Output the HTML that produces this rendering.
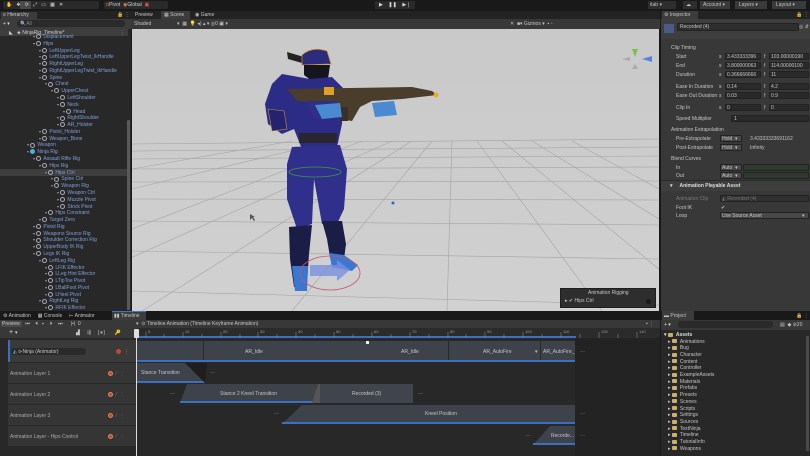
<!DOCTYPE html>
<html><head><meta charset="utf-8">
<style>
*{margin:0;padding:0;box-sizing:border-box}
body{width:810px;height:456px;background:#191919;font-family:"Liberation Sans",sans-serif;font-size:5px;color:#c4c4c4;position:relative;overflow:hidden}
.a{position:absolute}
.t{position:absolute;white-space:nowrap;line-height:6px}
.hr{position:absolute;left:0;width:128px;height:7px}
.ic{display:inline-block;width:5px;height:5px;border:1px solid #aab;border-radius:50%;vertical-align:middle;margin-right:2px}
.lb{color:#7d9fdc}
.fld{position:absolute;background:#2a2a2a;border:1px solid #222;height:7px;border-radius:1px}
.clip{position:absolute;background:#3c4048;border-bottom:2px solid #3b6fc0}
.fold{display:inline-block;width:5px;height:4px;background:#c8b070;margin-right:3px;vertical-align:middle;border-radius:1px}
</style></head><body>

<div class="a" style="left:0;top:0;width:810px;height:11px;background:#191919"></div>
<div class="a" style="left:3px;top:1px;width:96px;height:8px;background:#2a2a2a;border-radius:2px"></div>
<div class="a" style="left:20px;top:1px;width:11px;height:8px;background:#4a4a4a"></div>
<div class="t" style="left:6px;top:2px;color:#ddd">✋&nbsp;&nbsp;&nbsp;✥&nbsp;&nbsp;&nbsp;⟳&nbsp;&nbsp;&nbsp;⤢&nbsp;&nbsp;&nbsp;▭&nbsp;&nbsp;&nbsp;▦&nbsp;&nbsp;&nbsp;✕</div>
<div class="a" style="left:104px;top:1px;width:64px;height:8px;background:#2a2a2a;border-radius:2px"></div>
<div class="t" style="left:106px;top:2px;color:#ccc"><span style="color:#d55">◘</span>Pivot &nbsp;<span style="color:#d85">◉</span>Global &nbsp;<span style="color:#d55">▣</span></div>
<div class="a" style="left:375px;top:1px;width:40px;height:8px;background:#2a2a2a"></div>
<div class="t" style="left:379px;top:2px;color:#ddd">▶&nbsp;&nbsp;&nbsp;&nbsp;❚❚&nbsp;&nbsp;&nbsp;&nbsp;▶❘</div>
<div class="a" style="left:648px;top:1px;width:28px;height:8px;background:#2e2e2e"></div>
<div class="t" style="left:650px;top:2px">itab ▾</div>
<div class="a" style="left:683px;top:1px;width:14px;height:8px;background:#2e2e2e"></div>
<div class="t" style="left:686px;top:2px">☁</div>
<div class="a" style="left:700px;top:1px;width:30px;height:8px;background:#3a3a3a"></div>
<div class="t" style="left:703px;top:2px">Account ▾</div>
<div class="a" style="left:735px;top:1px;width:32px;height:8px;background:#3a3a3a"></div>
<div class="t" style="left:739px;top:2px">Layers ▾</div>
<div class="a" style="left:772px;top:1px;width:34px;height:8px;background:#3a3a3a"></div>
<div class="t" style="left:776px;top:2px">Layout ▾</div>

<div class="a" style="left:0;top:11px;width:131px;height:300px;background:#282828"></div>
<div class="a" style="left:0;top:11px;width:131px;height:8px;background:#232323"></div>
<div class="a" style="left:1px;top:12px;width:36px;height:7px;background:#3c3c3c"></div>
<div class="t" style="left:3px;top:12px">≡ Hierarchy</div>
<div class="t" style="left:117px;top:12px">🔒 ⋮</div>
<div class="a" style="left:0;top:19px;width:131px;height:10px;background:#3c3c3c"></div>
<div class="t" style="left:3px;top:21px;color:#ddd">+ ▾</div>
<div class="a" style="left:17px;top:20px;width:108px;height:7px;background:#2a2a2a;border-radius:3px"></div>
<div class="t" style="left:20px;top:21px;color:#888">🔍All</div>
<div class="a" style="left:0;top:29px;width:128px;height:7px;background:#3e3e3e"></div>
<div class="t" style="left:9px;top:30px;color:#ccc">◣&nbsp;&nbsp; ◈ NinjaRig_Timeline*</div>
<div class="t" style="left:120px;top:30px">⋮</div>
<div id="hier"></div>
<div class="a" style="left:127px;top:120px;width:3px;height:190px;background:#5a5a5a;border-radius:1px"></div>

<div class="a" style="left:131px;top:11px;width:529px;height:8px;background:#232323"></div>
<div class="t" style="left:135px;top:12px">Preview</div>
<div class="a" style="left:161px;top:11px;width:29px;height:8px;background:#3c3c3c"></div>
<div class="t" style="left:164px;top:12px">▦ Scene</div>
<div class="t" style="left:195px;top:12px">◉ Game</div>
<div class="a" style="left:131px;top:19px;width:529px;height:10px;background:#383838"></div>
<div class="t" style="left:134px;top:21px">Shaded</div>
<div class="t" style="left:177px;top:21px">▾ &nbsp;▦ &nbsp;💡 ◂) ▴ ▾ ◎0 ▣ ▾</div>
<div class="t" style="left:510px;top:21px">✕ &nbsp;■▾ Gizmos ▾ &nbsp;▪ ▫</div>
<svg class="a" style="left:132px;top:29px" width="527" height="282" viewBox="0 0 527 282">
<defs><linearGradient id="sk" x1="0" y1="0" x2="0" y2="1"><stop offset="0" stop-color="#c9c9c9"/><stop offset="1" stop-color="#d1d1d1"/></linearGradient></defs>
<rect width="527" height="282" fill="url(#sk)"/>
<g stroke="#9a9a9a" stroke-width="0.6" fill="none" opacity="0.8">
<path d="M0 115 L527 110"/><path d="M0 122 L527 118"/><path d="M0 130 L527 127"/><path d="M0 140 L527 138"/><path d="M0 153 L527 152"/><path d="M0 170 L527 171"/><path d="M0 192 L527 196"/><path d="M0 222 L527 230"/><path d="M0 262 L527 276"/>
<path d="M280 112 L10 282"/><path d="M300 112 L160 282"/><path d="M320 112 L315 282"/><path d="M345 112 L470 282"/><path d="M370 112 L527 240"/><path d="M260 112 L-120 282"/><path d="M400 112 L527 190"/><path d="M440 112 L527 160"/><path d="M230 112 L0 200"/><path d="M200 112 L0 160"/><path d="M160 112 L0 140"/>
</g>
<g>
<!-- head -->
<path d="M155 23 L172 28 L170 34 L156 30Z" fill="#222"/>
<path d="M170 26 Q180 17 195 22 L199 35 L170 36Z" fill="#2c2c7a" stroke="#c89030" stroke-width="0.7"/>
<path d="M172 36 L198 36 L196 50 L180 52 L172 46Z" fill="#151520"/>
<!-- torso -->
<path d="M150 45 L178 50 L200 48 L212 60 L210 95 L205 118 L170 120 L162 100 L150 105 L136 95 L133 75 L140 55Z" fill="#2c2c86"/>
<path d="M136 80 L152 82 L155 100 L140 102Z" fill="#232370" stroke="#c89030" stroke-width="0.6"/>
<rect x="167" y="104" width="38" height="10" fill="#2a2530"/>
<!-- legs -->
<path d="M160 118 L208 116 L215 140 L212 180 L205 195 L190 195 L182 150 L180 195 L165 200 L155 170 L155 135Z" fill="#30308c"/>
<path d="M157 198 L180 196 L177 225 L175 255 L162 258 L158 230Z" fill="#1a1d45"/>
<path d="M190 192 L210 192 L214 215 L212 230 L198 228 L195 210Z" fill="#1a1d45"/>
<path d="M160 237 L176 237 L175 262 L163 262Z" fill="#3a78d0"/>
<path d="M197 224 L212 226 L226 236 L220 242 L200 238Z" fill="#3a78d0"/>
<!-- gun & arms -->
<path d="M155 60 L280 58 L300 62 L305 66 L270 70 L240 72 L228 78 L220 92 L208 90 L205 75 L165 72Z" fill="#4a3d2c"/>
<rect x="192" y="58" width="10" height="8" fill="#e0a020"/>
<circle cx="304" cy="66" r="2.5" fill="#e8b020"/>
<rect x="208" y="78" width="8" height="14" fill="#3a3028"/>
<path d="M175 72 L205 72 L208 88 L182 92Z" fill="#2f2f8a"/>
<path d="M183 76 L208 74 L210 88 L190 90Z" fill="#4a8ad0"/>
<path d="M240 74 L262 72 L265 86 L243 88Z" fill="#4a8ad0"/>
<ellipse cx="183" cy="143" rx="26" ry="5" fill="none" stroke="#3a9a3a" stroke-width="0.8"/>
<ellipse cx="198" cy="244" rx="30" ry="17" fill="none" stroke="#c85070" stroke-width="0.8"/>
<path d="M178 236 L205 236 L205 231 L218 241 L205 252 L205 247 L178 247Z" fill="#7a90e0" opacity="0.8"/>
<circle cx="261" cy="174" r="1.5" fill="#2a6ad0"/>
<path d="M118 185 L118 191 L120 189 L122 192 L123 191 L121 188 L123 188Z" fill="#555"/>
</g>
<path d="M500 20 L503 28 L506 20Z" fill="#7ac050"/><path d="M510 30 L520 27 L520 33Z" fill="#5a80e0"/><path d="M490 30 L498 28 L498 32Z" fill="#aaa"/><path d="M500 40 L503 35 L506 40Z" fill="#aaa"/>
</svg>
<div class="a" style="left:560px;top:288px;width:96px;height:20px;background:#2e2e2e;border:1px solid #1e1e1e"></div>
<div class="t" style="left:588px;top:290px">Animation Rigging</div>
<div class="t" style="left:565px;top:298px">▸ ✔ Hips Ctrl</div>
<div class="a" style="left:646px;top:299px;width:5px;height:5px;border-radius:50%;background:#1a1a1a"></div>

<div class="a" style="left:661px;top:11px;width:149px;height:300px;background:#383838"></div>
<div class="a" style="left:661px;top:11px;width:149px;height:8px;background:#232323"></div>
<div class="a" style="left:662px;top:11px;width:36px;height:8px;background:#3c3c3c"></div>
<div class="t" style="left:664px;top:12px">⚙ Inspector</div>
<div class="t" style="left:796px;top:12px">🔒 ⋮</div>
<div class="a" style="left:661px;top:19px;width:149px;height:20px;background:#3e3e3e"></div>
<div class="a" style="left:664px;top:24px;width:10px;height:9px;background:#4a5a8a"></div>
<div class="fld" style="left:677px;top:23px;width:122px;height:8px;background:#2e2e2e"></div>
<div class="t" style="left:680px;top:24px">Recorded (4)</div>
<div class="t" style="left:799px;top:24px">◎ ⇵</div>
<div id="insp"></div>
<div class="a" style="left:661px;top:180px;width:149px;height:11px;background:#3e3e3e;border-top:1px solid #2a2a2a"></div>
<div class="t" style="left:670px;top:183px;color:#ddd;font-weight:bold">▾ &nbsp;&nbsp;&nbsp;&nbsp;Animation Playable Asset</div>

<div class="a" style="left:0;top:311px;width:660px;height:145px;background:#282828"></div>
<div class="a" style="left:0;top:311px;width:660px;height:9px;background:#191919"></div>
<div class="t" style="left:3px;top:313px">⚙ Animation &nbsp;&nbsp;&nbsp;&nbsp;▦ Console &nbsp;&nbsp;&nbsp;&nbsp;⊢ Animator</div>
<div class="a" style="left:112px;top:311px;width:34px;height:9px;background:#3c3c3c;border-top:1px solid #3a79c0"></div>
<div class="t" style="left:114px;top:313px">▮▮ Timeline</div>
<div class="a" style="left:0;top:320px;width:660px;height:8px;background:#383838"></div>
<div class="a" style="left:1px;top:321px;width:21px;height:6px;background:#4a4a4a"></div>
<div class="t" style="left:2px;top:321px">Preview &nbsp;&nbsp;&nbsp;⏮ &nbsp;&nbsp;&nbsp;⏴ &nbsp;&nbsp;▸ &nbsp;&nbsp;&nbsp;⏵ &nbsp;&nbsp;&nbsp;⏭ &nbsp;&nbsp;&nbsp;&nbsp;&nbsp;|•| &nbsp;0</div>
<div class="t" style="left:136px;top:321px">▾ &nbsp;⊙ Timeline Animation (Timeline Keyframe Animation)</div>
<div class="t" style="left:646px;top:321px">▪ ⋮</div>
<div class="a" style="left:0;top:328px;width:136px;height:10px;background:#383838"></div>
<div class="t" style="left:9px;top:330px;font-size:7px;color:#ddd">+ <span style="font-size:5px">▾</span></div>
<div class="t" style="left:76px;top:330px">▟ &nbsp;&nbsp;&nbsp;&nbsp;⇶ &nbsp;&nbsp;&nbsp;&nbsp;[∗] &nbsp;&nbsp;&nbsp;&nbsp;&nbsp;&nbsp;🔑</div>
<div class="a" style="left:136px;top:328px;width:524px;height:10px;background:#2b2b2b"></div>
<div class="a" style="left:136px;top:336px;width:440px;height:2px;background:#3b6fc0"></div>
<svg class="a" style="left:136px;top:328px" width="524" height="10">
<g stroke="#888" stroke-width="0.6">
<path d="M10 4 V10 M28 6 V10 M47 4 V10 M66 6 V10 M85 4 V10 M104 6 V10 M122 4 V10 M141 6 V10 M160 4 V10 M179 6 V10 M198 4 V10 M217 6 V10 M236 4 V10 M255 6 V10 M274 4 V10 M293 6 V10 M312 4 V10 M330 6 V10 M349 4 V10 M368 6 V10 M387 4 V10 M406 6 V10 M425 4 V10 M444 6 V10 M463 4 V10 M482 6 V10 M501 4 V10"/>
</g>
<g fill="#999" font-size="4" font-family="Liberation Sans"><text x="12" y="5">5</text><text x="49" y="5">10</text><text x="87" y="5">20</text><text x="124" y="5">30</text><text x="162" y="5">40</text><text x="200" y="5">50</text><text x="238" y="5">60</text><text x="276" y="5">70</text><text x="314" y="5">80</text><text x="351" y="5">90</text><text x="389" y="5">100</text><text x="427" y="5">110</text><text x="465" y="5">130</text><text x="503" y="5">140</text></g>
</svg>
<div class="a" style="left:134px;top:329px;width:5px;height:9px;background:#ddd;border-radius:1px"></div>
<div class="a" style="left:136px;top:338px;width:1px;height:118px;background:#ddd"></div>
<div class="a" style="left:575px;top:338px;width:85px;height:118px;background:#232323"></div>
<div class="a" style="left:8px;top:340px;width:128px;height:22px;background:#3a3a3a;border-left:2px solid #3b6fc0"></div>
<div class="a" style="left:11px;top:348px;width:75px;height:7px;background:#2a2a2a;border-radius:3px"></div>
<div class="t" style="left:13px;top:349px"><span style="color:#5ac">◭</span> ⊳Ninja (Animator)</div>
<div class="a" style="left:116px;top:349px;width:5px;height:5px;border-radius:50%;background:#c04a30"></div>
<div class="t" style="left:124px;top:349px">⋮</div>
<div id="tracks"></div>
<div class="clip" style="left:137px;top:341px;width:438px;height:21px;background:#3e424b"></div>
<div class="a" style="left:203px;top:341px;width:1px;height:19px;background:#2a2a2a"></div>
<div class="a" style="left:448px;top:341px;width:1px;height:19px;background:#2a2a2a"></div>
<div class="a" style="left:540px;top:341px;width:1px;height:19px;background:#2a2a2a"></div>
<div class="t" style="left:245px;top:349px">AR_Idle</div>
<div class="t" style="left:401px;top:349px">AR_Idle</div>
<div class="t" style="left:483px;top:349px">AR_AutoFire</div>
<div class="t" style="left:543px;top:349px">AR_AutoFire_</div>
<div class="t" style="left:535px;top:349px">▾</div>
<svg class="a" style="left:137px;top:362px" width="440" height="84">
<path d="M0 1 H50 L68 21 H0Z" fill="#3e424b"/><path d="M0 19 H68 V21 H0Z" fill="#3b6fc0"/>
<path d="M48 1 H70 L68 21Z" fill="#1e1e1e"/>
<path d="M43 41 L50 22 H276 V41Z" fill="#3e424b"/><path d="M43 39 H276 V41 H43Z" fill="#3b6fc0"/>
<path d="M183 22 H276 V41 H183Z" fill="#40444c"/><path d="M181 22 L183 22 L183 41 L175 41Z" fill="#555"/>
<path d="M145 62 L165 43 H438 V62Z" fill="#3e424b"/><path d="M145 60 H438 V62 H145Z" fill="#3b6fc0"/>
<path d="M396 83 L413 64 H438 V83Z" fill="#3e424b"/><path d="M396 81 H438 V83 H396Z" fill="#3b6fc0"/>
</svg>
<div class="t" style="left:141px;top:370px">Stance Transition</div>
<div class="t" style="left:220px;top:391px">Stance 2 Kneel Transition</div>
<div class="t" style="left:352px;top:391px">Recorded (3)</div>
<div class="t" style="left:425px;top:411px">Kneel Position</div>
<div class="t" style="left:551px;top:433px">Recorde...</div>
<div class="t" style="left:210px;top:370px;color:#666">—</div>
<div class="t" style="left:170px;top:391px;color:#666">—</div>
<div class="t" style="left:418px;top:391px;color:#666">—</div>
<div class="t" style="left:274px;top:411px;color:#666">—</div>
<div class="t" style="left:525px;top:433px;color:#666">—</div>
<div class="t" style="left:580px;top:349px;color:#666">—</div>
<div class="t" style="left:580px;top:411px;color:#666">—</div>
<div class="t" style="left:580px;top:433px;color:#666">—</div>
<div class="a" style="left:366px;top:341px;width:3px;height:3px;background:#eee"></div>

<div class="a" style="left:661px;top:311px;width:149px;height:145px;background:#282828"></div>
<div class="a" style="left:661px;top:311px;width:149px;height:9px;background:#191919"></div>
<div class="a" style="left:662px;top:311px;width:32px;height:9px;background:#3c3c3c"></div>
<div class="t" style="left:664px;top:313px">▬ Project</div>
<div class="t" style="left:796px;top:313px">🔒 ⋮</div>
<div class="a" style="left:661px;top:320px;width:149px;height:10px;background:#383838"></div>
<div class="t" style="left:664px;top:322px;color:#ddd">+ ▾</div>
<div class="a" style="left:678px;top:321px;width:95px;height:7px;background:#2a2a2a;border-radius:3px"></div>
<div class="t" style="left:780px;top:322px">▤ &nbsp;◆ ⊘20</div>
<div class="a" style="left:806px;top:336px;width:3px;height:115px;background:#4a4a4a"></div>
<div id="proj"></div>

<script>
var H=[["Displacement",2],["Hips",2],["LeftUpperLeg",3],["LeftUpperLegTwist_IkHandle",3],["RightUpperLeg",3],["RightUpperLegTwist_IkHandle",3],["Spine",3],["Chest",4],["UpperChest",5],["LeftShoulder",6],["Neck",6],["Head",7],["RightShoulder",6],["AR_Holster",6],["Pistol_Holster",3],["Weapon_Bone",3],["Weapon",1],["Ninja Rig",1],["Assault Rifle Rig",2],["Hips Rig",3],["Hips Ctrl",4],["Spine Ctrl",5],["Weapon Rig",5],["Weapon Ctrl",6],["Muzzle Pivot",6],["Stock Pivot",6],["Hips Constraint",4],["Target Zero",3],["Pistol Rig",2],["Weapons Source Rig",2],["Shoulder Correction Rig",2],["UpperBody IK Rig",2],["Legs IK Rig",2],["LeftLeg Rig",3],["LFIK Effector",4],["LLeg Hint Effector",4],["LTipToe Pivot",4],["LBallFoot Pivot",4],["LHeel Pivot",4],["RightLeg Rig",3],["RFIK Effector",4]];
var s="";H.forEach(function(h,i){var y=34+i*6.78;var x=27+6*h[1];
if(h[0]=="Hips Ctrl")s+='<div class="hr" style="top:'+(y-0.5)+'px;background:#3e3e3e"></div>';
var ic=h[0]=="Ninja Rig"?'<span class="ic" style="background:#4ab0e0;border-color:#4ab0e0"></span>':'<span class="ic"></span>';
s+='<div class="t lb" style="left:'+(x-6)+'px;top:'+y+'px"><span style="color:#999;font-size:4px">▾</span> '+ic+h[0]+'</div>';});
document.getElementById("hier").innerHTML=s;
var I=[["Clip Timing",671,45],["Start",676,54],["End",676,63],["Duration",676,72],["Ease In Duration",676,84],["Ease Out Duration",676,93],["Clip In",676,105],["Speed Multiplier",676,116],["Animation Extrapolation",671,127],["Pre-Extrapolate",676,136],["Post-Extrapolate",676,145],["Blend Curves",671,156],["In",676,165],["Out",676,173],["Animation Clip",676,196],["Foot IK",676,205],["Loop",676,213]];
var f="";I.forEach(function(r){f+='<div class="t" style="left:'+r[1]+'px;top:'+r[2]+'px;color:'+(r[0]=="Animation Clip"?"#777":"#c4c4c4")+'">'+r[0]+'</div>';});
var V=[[54,"3.433333396","103.00000190"],[63,"3.800000063","114.00000190"],[72,"0.366666666","11"],[84,"0.14","4.2"],[93,"0.03","0.9"],[105,"0","0"]];
V.forEach(function(v){f+='<div class="t" style="left:719px;top:'+v[0]+'px">s</div><div class="fld" style="left:725px;top:'+(v[0]-1)+'px;width:36px"></div><div class="t" style="left:727px;top:'+v[0]+'px">'+v[1]+'</div><div class="t" style="left:764px;top:'+v[0]+'px">f</div><div class="fld" style="left:769px;top:'+(v[0]-1)+'px;width:40px"></div><div class="t" style="left:771px;top:'+v[0]+'px">'+v[2]+'</div>';});
f+='<div class="fld" style="left:731px;top:115px;width:78px"></div><div class="t" style="left:734px;top:116px">1</div>';
f+='<div class="fld" style="left:720px;top:135px;width:22px;background:#484848"></div><div class="t" style="left:722px;top:136px">Hold &nbsp;▾</div><div class="t" style="left:750px;top:136px">3.43333333691162</div>';
f+='<div class="fld" style="left:720px;top:144px;width:22px;background:#484848"></div><div class="t" style="left:722px;top:145px">Hold &nbsp;▾</div><div class="t" style="left:750px;top:145px">Infinity</div>';
f+='<div class="fld" style="left:720px;top:164px;width:22px;background:#484848"></div><div class="t" style="left:722px;top:165px">Auto &nbsp;▾</div><div class="fld" style="left:743px;top:164px;width:66px;background:#2d3a2d"></div>';
f+='<div class="fld" style="left:720px;top:172px;width:22px;background:#484848"></div><div class="t" style="left:722px;top:173px">Auto &nbsp;▾</div><div class="fld" style="left:743px;top:172px;width:66px;background:#2d3a2d"></div>';
f+='<div class="fld" style="left:720px;top:195px;width:89px;background:#303030"></div><div class="t" style="left:722px;top:196px;color:#777">◭ Recorded (4)</div>';
f+='<div class="t" style="left:721px;top:205px">✔</div>';
f+='<div class="fld" style="left:720px;top:212px;width:89px;background:#484848"></div><div class="t" style="left:722px;top:213px">Use Source Asset</div><div class="t" style="left:802px;top:213px">▾</div>';
document.getElementById("insp").innerHTML=f;
var T=["Animation Layer 1","Animation Layer 2","Animation Layer 3","Animation Layer - Hips Control"];var t="";
T.forEach(function(n,i){var y=363+i*21;t+='<div class="a" style="left:8px;top:'+y+'px;width:128px;height:20px;background:#353535"></div><div class="t" style="left:10px;top:'+(y+8)+'px;color:#aaa">'+n+'</div><div class="a" style="left:108px;top:'+(y+8)+'px;width:5px;height:5px;border-radius:50%;background:#c04a30;border:1px solid #e08060"></div><div class="t" style="left:116px;top:'+(y+8)+'px;color:#777">⁄ &nbsp;⋮</div>';});
document.getElementById("tracks").innerHTML=t;
var P=["Animations","Bug","Character","Content","Controller","ExampleAssets","Materials","Prefabs","Presets","Scenes","Scripts","Settings","Sources","TextNinja","Timeline","TutorialInfo","Weapons"];
var p='<div class="t" style="left:664px;top:332px;color:#ddd;font-weight:bold">▾ <span class="fold"></span>Assets</div>';
P.forEach(function(n,i){p+='<div class="t" style="left:668px;top:'+(338.5+i*6.7)+'px">▸ <span class="fold"></span>'+n+'</div>';});
document.getElementById("proj").innerHTML=p;
</script>
</body></html>
